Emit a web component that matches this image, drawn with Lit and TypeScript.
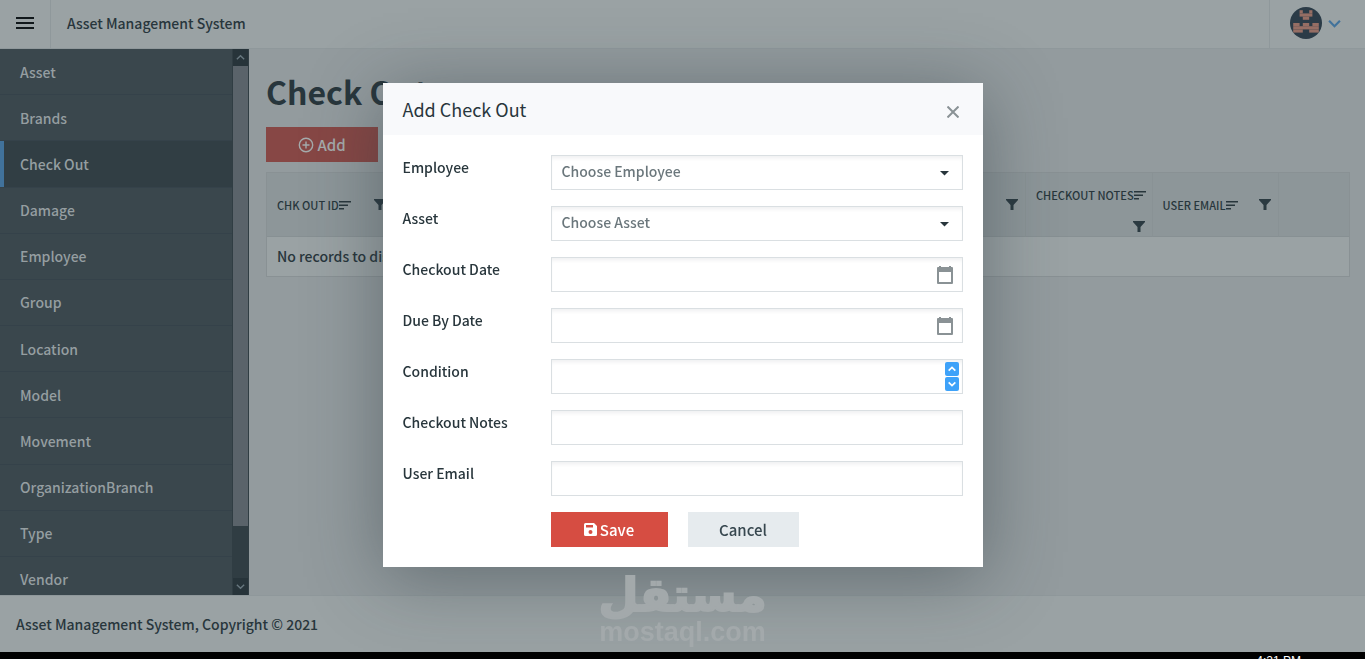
import { LitElement, html, css, svg } from "lit";
import { customElement, state } from "lit/decorators.js";

const menu = ["Asset", "Brands", "Check Out", "Damage", "Employee", "Group", "Location", "Model", "Movement", "OrganizationBranch", "Type", "Vendor"];
const columns = ["Chk Out Id", "Employee", "Asset", "Checkout", "Due Date", "Condition", "Checkout Notes", "User Email"];

const chevron = (d: string, size: number, width = 2) => html`<svg width=${size} height=${size} viewBox="0 0 12 12" fill="none" stroke="currentColor" stroke-width=${width} aria-hidden="true"><path d=${d} /></svg>`;
const UP = "M2 8L6 4L10 8";
const DOWN = "M2 4L6 8L10 4";
const WIDE_DOWN = "M1 3.500L6 8.500L11 3.500";
const calendar = html`<svg width="18" height="18" viewBox="0 0 18 18" fill="currentColor" aria-hidden="true"><path d="M3 0h2v1h8V0h2v1h1q1 0 1 1v15q0 1-1 1H2q-1 0-1-1V2q0-1 1-1h1zM3 6v10h12V6z" fill-rule="evenodd" /></svg>`;
const sortIcon = html`<svg width="12" height="10" viewBox="0 0 12 10" fill="currentColor" aria-hidden="true"><path d="M0 1h12v1.500H0zM0 4.500h9V6H0zM0 8h5v1.500H0z" /></svg>`;
const filterIcon = html`<svg width="12" height="11" viewBox="0 0 12 11" fill="currentColor" aria-hidden="true"><path d="M0 0h12v1L7.500 6v5h-3V6L0 1z" /></svg>`;
const avatarCells = ["3,1,1,1", "6,1,1,1", "3,2,4,1", "4,3,2,1", "1,5,2,1", "4,5,2,1", "7,5,2,1", "1,6,8,1", "1,7,3,1", "6,7,3,1"].map((c) => c.split(","));

@customElement("app-root")
export class AppRoot extends LitElement {
  @state() private open = true;

  static styles = css`
    :host {
      display: grid;
      grid-template-rows: auto minmax(0, 1fr) auto auto;
      height: 100vh;
      overflow: hidden;
      background: #939b9e;
      color: #28363c;
      font: 500 14px/24px "Noto Sans CJK SC", "Noto Sans", sans-serif;
    }
    * { box-sizing: border-box; }
    svg { display: block; flex: none; }
    button, input, select { font: inherit; border: 0; border-radius: 0; margin: 0; padding: 0; color: inherit; background: none; }
    header { display: flex; align-items: stretch; height: 49px; background: #9aa2a4; border-bottom: 1px solid #8f989b; }
    .toggle { width: 51px; padding: 0 16px 2px; border-right: 1px solid #8f989b; color: #11181b; }
    .brand { flex: 1; padding: 11px 16px; }
    .profile { display: flex; align-items: center; gap: 6px; width: 96px; padding: 0 20px 2px; border-left: 1px solid #8f989b; color: #41729b; }
    .body { display: flex; min-height: 0; }
    .sidebar { display: flex; width: 249px; flex: none; background: #3a474d; overflow: hidden; }
    .menu { display: grid; grid-auto-rows: 1fr; flex: 1; height: 554px; margin: 0; padding: 0; list-style: none; }
    .menu li { display: flex; border-bottom: 1px solid #35424a; }
    .menu a { flex: 1; display: flex; align-items: center; padding-left: 20px; color: #959ea1; text-decoration: none; }
    .menu .active { background: #313e44; border-left: 4px solid #41729b; padding-left: 16px; }
    .scroll { display: grid; grid-template-rows: 17px 460px 1fr 17px; width: 17px; background: #303d43; color: #67777f; padding: 0 1px; }
    .scroll .thumb { background: #5a636a; }
    .arrow { display: grid; place-items: center; background: #27343a; }
    main { flex: 1; min-width: 0; padding: 22px 15px 0 17px; }
    h1 { margin: 0; font-size: 32px; line-height: 40px; font-weight: 700; }
    .add { display: flex; justify-content: center; align-items: center; gap: 3px; width: 112px; height: 35px; margin: 16px 0 10px; background: #874745; color: #a5abac; font-size: 15px; }
    table { width: 100%; border-collapse: separate; border-spacing: 0; table-layout: fixed; border: 1px solid #899194; background: #9aa2a4; }
    th { height: 62px; padding: 0 7px 0 10px; background: #8d9699; border-right: 1px solid #899295; border-bottom: 1px solid #879093; font-size: 11px; font-weight: 500; text-transform: uppercase; }
    th:last-child { width: 70px; border-right: 0; }
    .head { display: flex; flex-wrap: wrap; align-items: center; }
    .title { display: flex; align-items: center; height: 43px; padding-right: 8px; white-space: nowrap; }
    .filter { height: 20px; margin-left: auto; color: #2b3a41; display: flex; align-items: center; }
    td { height: 39px; padding: 0 10px 2px; }
    footer { background: #9aa2a4; border-top: 1px solid #8f989b; padding: 16px; height: 57px; }
    .taskbar { height: 7px; overflow: hidden; background: #000; color: #fff; text-align: right; padding-right: 64px; font: 12px/18px "Liberation Sans", sans-serif; }
    .watermark { position: absolute; z-index: 1; left: 50%; bottom: 13px; translate: -50% 0; color: #a3a9ab; text-align: center; pointer-events: none; font-family: "DejaVu Sans", sans-serif; font-weight: 700; }
    .arabic { font-size: 46px; line-height: 48px; -webkit-text-stroke: 2px #a3a9ab; }
    .latin { font: 700 27px/27px "Liberation Sans", sans-serif; }
    .overlay { position: fixed; inset: 0; display: grid; place-items: start center; padding-top: 83px; }
    .dialog { width: min(600px, 100%); background: #fff; color: #28363c; box-shadow: 0 10px 70px rgba(40, 54, 60, 0.45); }
    .dialog-head { display: flex; align-items: center; justify-content: space-between; height: 52px; padding: 0 24px 0 20px; background: #f8f9fb; }
    h2 { margin: 0; font-size: 18px; line-height: 28px; font-weight: 400; }
    .close { color: #8a9295; padding-top: 6px; }
    form { display: grid; gap: 16px; padding: 20px; }
    .row { display: grid; grid-template-columns: 148px minmax(0, 1fr); align-items: start; }
    .row label { line-height: 24px; }
    .field { display: flex; align-items: center; height: 35px; border: 1px solid #dadfe2; background: #fff; box-shadow: inset 0 4px 4px -2px #eeeff0; position: relative; }
    .field input, .field select { flex: 1; min-width: 0; height: 33px; padding: 0 10px 3px; outline-color: #3ea2f9; }
    .field select { appearance: none; color: #6b777c; }
    .caret { position: absolute; right: 13px; top: 15px; pointer-events: none; }
    .cal { margin-right: 8px; color: #8a9295; }
    .spin { display: grid; gap: 1px; margin-right: 3px; }
    .spin button { display: grid; place-items: center; width: 14px; height: 14px; border-radius: 2px; background: #3ea2f9; color: #fff; }
    .actions { display: flex; gap: 20px; padding-left: 148px; }
    .actions button { display: flex; align-items: center; justify-content: center; gap: 3px; height: 35px; font-size: 15px; }
    .save { width: 117px; background: #d64d42; color: #fff; }
    .cancel { width: 111px; background: #e6ebee; color: #37474f; }
  `;

  private control(label: string, kind: string) {
    const id = label.toLowerCase().replace(/ /g, "-");
    const body =
      kind === "select"
        ? html`<select id=${id}><option>Choose ${label}</option></select><svg class="caret" width="9" height="5" viewBox="0 0 9 5" aria-hidden="true"><path d="M0 0h9L4.500 4.500z" fill="#28363c" /></svg>`
        : kind === "date"
          ? html`<input id=${id} type="text" /><button class="cal" type="button" aria-label="Open calendar">${calendar}</button>`
          : kind === "number"
            ? html`<input id=${id} type="text" inputmode="numeric" /><span class="spin"><button type="button" aria-label="Increase">${chevron(UP, 10)}</button><button type="button" aria-label="Decrease">${chevron(DOWN, 10)}</button></span>`
            : html`<input id=${id} type="text" />`;
    return html`<div class="row"><label for=${id}>${label}</label><div class="field">${body}</div></div>`;
  }

  private close() {
    this.open = false;
  }

  render() {
    return html`
      <header>
        <button class="toggle" aria-label="Toggle menu"><svg width="18" height="12" viewBox="0 0 18 12" fill="currentColor"><path d="M0 0h18v2H0zM0 5h18v2H0zM0 10h18v2H0z" /></svg></button>
        <div class="brand">Asset Management System</div>
        <button class="profile" aria-label="Profile">
          <svg width="32" height="32" viewBox="0 0 10 10"><circle cx="5" cy="5" r="5" fill="#2b3b47" />${avatarCells.map(([x, y, w, h]) => svg`<rect x=${x} y=${y} width=${w} height=${h} fill="#966e64" />`)}</svg>
          ${chevron(WIDE_DOWN, 13)}
        </button>
      </header>
      <div class="body">
        <nav class="sidebar">
          <ul class="menu">${menu.map((m) => html`<li><a href="#" class=${m === "Check Out" ? "active" : ""}>${m}</a></li>`)}</ul>
          <div class="scroll" aria-hidden="true"><span class="arrow">${chevron(UP, 11, 1.500)}</span><span class="thumb"></span><span></span><span class="arrow">${chevron(DOWN, 11, 1.500)}</span></div>
        </nav>
        <main>
          <h1>Check Out</h1>
          <button class="add" @click=${() => (this.open = true)}>
            <svg width="16" height="16" viewBox="0 0 16 16" fill="none" stroke="currentColor" stroke-width="1.400"><circle cx="8" cy="8" r="6.700" /><path d="M8 4.500v7M4.500 8h7" /></svg>Add
          </button>
          <table>
            <thead><tr>
              ${columns.map((c) => html`<th><div class="head"><span class="title">${c}${sortIcon}</span><button class="filter" aria-label="Filter">${filterIcon}</button></div></th>`)}
              <th></th>
            </tr></thead>
            <tbody><tr><td colspan="9">No records to display.</td></tr></tbody>
          </table>
        </main>
      </div>
      <footer>Asset Management System, Copyright © 2021</footer>
      <div class="taskbar">4:21 PM</div>
      <div class="watermark"><div class="arabic" lang="ar" dir="rtl">مستقل</div><div class="latin">mostaql.com</div></div>
      ${this.open
        ? html`<div class="overlay"><section class="dialog" role="dialog" aria-labelledby="dialog-title">
            <div class="dialog-head"><h2 id="dialog-title">Add Check Out</h2>
              <button class="close" aria-label="Close" @click=${this.close}><svg width="12" height="12" viewBox="0 0 12 12" stroke="currentColor" stroke-width="2"><path d="M0.500 0.500L11.500 11.500M11.500 0.500L0.500 11.500" /></svg></button></div>
            <form @submit=${(e: Event) => e.preventDefault()}>
              ${this.control("Employee", "select")}${this.control("Asset", "select")}${this.control("Checkout Date", "date")}${this.control("Due By Date", "date")}${this.control("Condition", "number")}${this.control("Checkout Notes", "text")}${this.control("User Email", "text")}
              <div class="actions">
                <button class="save" type="submit"><svg width="13" height="13" viewBox="0 0 13 13" fill="currentColor"><path fill-rule="evenodd" d="M1.500 0H10l3 3v8.500q0 1.500-1.500 1.500h-10Q0 13 0 11.500v-10Q0 0 1.500 0zM2 2v2.500h7V2zM6.500 7a2 2 0 1 0 0 4a2 2 0 1 0 0-4z" /></svg>Save</button>
                <button class="cancel" type="button" @click=${this.close}>Cancel</button>
              </div>
            </form>
          </section></div>`
        : ""}
    `;
  }
}
